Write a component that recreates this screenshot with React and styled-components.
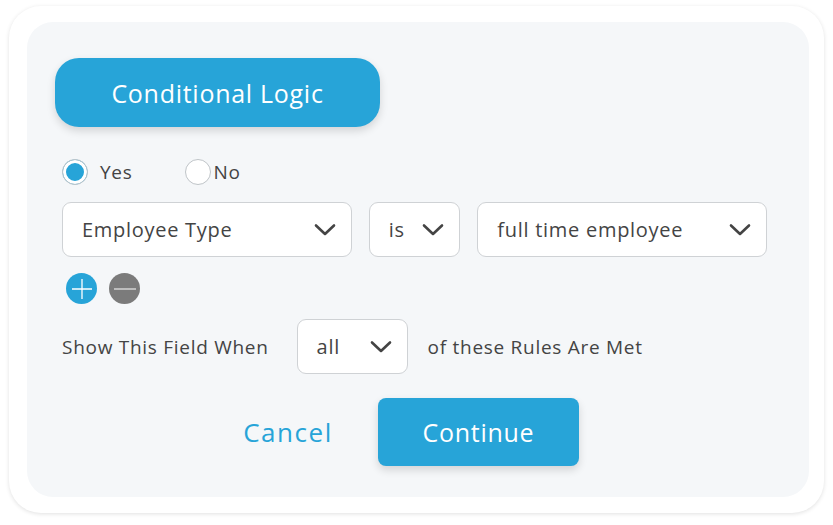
import React from 'react'
import styled, { createGlobalStyle } from 'styled-components'

const GlobalStyle = createGlobalStyle`
  html, body {
    margin: 0;
    padding: 0;
    background: #ffffff;
  }
  body {
    font-family: "Open Sans", "Liberation Sans", sans-serif;
    letter-spacing: 0.045em;
    color: #444444;
  }
`

const Page = styled.div`
  width: 833px;
  height: 525px;
  box-sizing: border-box;
  padding: 6px 9px 12px 9px;
`

const Card = styled.div`
  height: 100%;
  box-sizing: border-box;
  background: #ffffff;
  border-radius: 32px;
  box-shadow: 0 1px 4px rgba(0, 0, 0, 0.12);
  padding: 16px 15px 16px 18px;
`

const Panel = styled.div`
  height: 100%;
  box-sizing: border-box;
  background: #f5f7f9;
  border-radius: 26px;
  padding: 36px 42px 31px 28px;
  display: flex;
  flex-direction: column;
`

const TitleButton = styled.button`
  width: 325px;
  height: 70px;
  border: none;
  border-radius: 24px;
  background: #27a4d8;
  color: #ffffff;
  font-family: inherit;
  letter-spacing: inherit;
  font-size: 25px;
  box-shadow: 0 4px 8px rgba(0, 0, 0, 0.14);
  padding: 0;
  cursor: pointer;
`

const Body = styled.div`
  padding-left: 7px;
  display: flex;
  flex-direction: column;
`

const RadioRow = styled.div`
  margin-top: 32px;
  height: 26px;
  display: flex;
  align-items: center;
`

const RadioOption = styled.label`
  display: flex;
  align-items: center;
  gap: ${p => (p.$checked ? '12px' : '3px')};
  margin-right: 52px;
  font-size: 19px;
  color: #444;
`

const RadioDot = styled.span`
  box-sizing: border-box;
  width: 26px;
  height: 26px;
  border-radius: 50%;
  border: 1px solid #bfc4c8;
  background: ${p => (p.$checked ? '#27a4d8' : '#ffffff')};
  box-shadow: ${p => (p.$checked ? 'inset 0 0 0 3px #ffffff' : 'none')};
`

const SelectRow = styled.div`
  margin-top: 17px;
  display: flex;
  gap: 17px;
`

const Select = styled.div`
  box-sizing: border-box;
  width: ${p => p.$width}px;
  height: 55px;
  border: 1px solid #cfd2d5;
  border-radius: 9px;
  background: #ffffff;
  display: flex;
  align-items: center;
  justify-content: space-between;
  padding: 0 15px 0 19px;
  font-size: 20px;
  color: #444;
`

const Chevron = () => (
  <svg width="22" height="14" viewBox="0 0 22 14">
    <path d="M2 2.5 L11 11 L20 2.5" fill="none" stroke="#444" strokeWidth="2.6" strokeLinecap="round" strokeLinejoin="round" />
  </svg>
)

const IconRow = styled.div`
  margin-top: 16px;
  padding-left: 4px;
  display: flex;
  gap: 12px;
`

const RoundIcon = styled.span`
  width: 31px;
  height: 31px;
  border-radius: 50%;
  background: ${p => p.$color};
  display: flex;
  align-items: center;
  justify-content: center;
`

const RuleRow = styled.div`
  margin-top: 15px;
  display: flex;
  align-items: center;
  font-size: 19px;
  color: #444;
`

const RuleText = styled.span`
  margin: ${p => p.$margin};
`

const Footer = styled.div`
  margin-top: 24px;
  display: flex;
  justify-content: center;
  align-items: center;
  gap: 45px;
`

const CancelLink = styled.button`
  background: none;
  border: none;
  padding: 0;
  font-family: inherit;
  letter-spacing: 0.06em;
  font-size: 26px;
  color: #27a4d8;
  cursor: pointer;
`

const ContinueButton = styled.button`
  width: 201px;
  height: 68px;
  border: none;
  border-radius: 8px;
  background: #27a4d8;
  color: #ffffff;
  font-family: inherit;
  letter-spacing: inherit;
  font-size: 25px;
  box-shadow: 0 4px 8px rgba(0, 0, 0, 0.14);
  cursor: pointer;
`

export default function App() {
  return (
    <>
      <GlobalStyle />
      <Page>
        <Card>
          <Panel>
            <TitleButton>Conditional Logic</TitleButton>
            <Body>
              <RadioRow>
                <RadioOption $checked>
                  <RadioDot $checked />
                  Yes
                </RadioOption>
                <RadioOption>
                  <RadioDot />
                  No
                </RadioOption>
              </RadioRow>
              <SelectRow>
                <Select $width={291}>
                  <span>Employee Type</span>
                  <Chevron />
                </Select>
                <Select $width={92}>
                  <span>is</span>
                  <Chevron />
                </Select>
                <Select $width={291}>
                  <span>full time employee</span>
                  <Chevron />
                </Select>
              </SelectRow>
              <IconRow>
                <RoundIcon $color="#27a4d8">
                  <svg width="22" height="22" viewBox="0 0 22 22">
                    <path d="M11 1 V21 M1 11 H21" stroke="#ffffff" strokeWidth="1.3" />
                  </svg>
                </RoundIcon>
                <RoundIcon $color="#7b7b7b">
                  <svg width="24" height="4" viewBox="0 0 24 4">
                    <path d="M1 2 H23" stroke="#e2e2e2" strokeWidth="1.3" />
                  </svg>
                </RoundIcon>
              </IconRow>
              <RuleRow>
                <RuleText $margin="0 28px 0 0">Show This Field When</RuleText>
                <Select $width={111}>
                  <span>all</span>
                  <Chevron />
                </Select>
                <RuleText $margin="0 0 0 20px">of these Rules Are Met</RuleText>
              </RuleRow>
            </Body>
            <Footer>
              <CancelLink>Cancel</CancelLink>
              <ContinueButton>Continue</ContinueButton>
            </Footer>
          </Panel>
        </Card>
      </Page>
    </>
  )
}
